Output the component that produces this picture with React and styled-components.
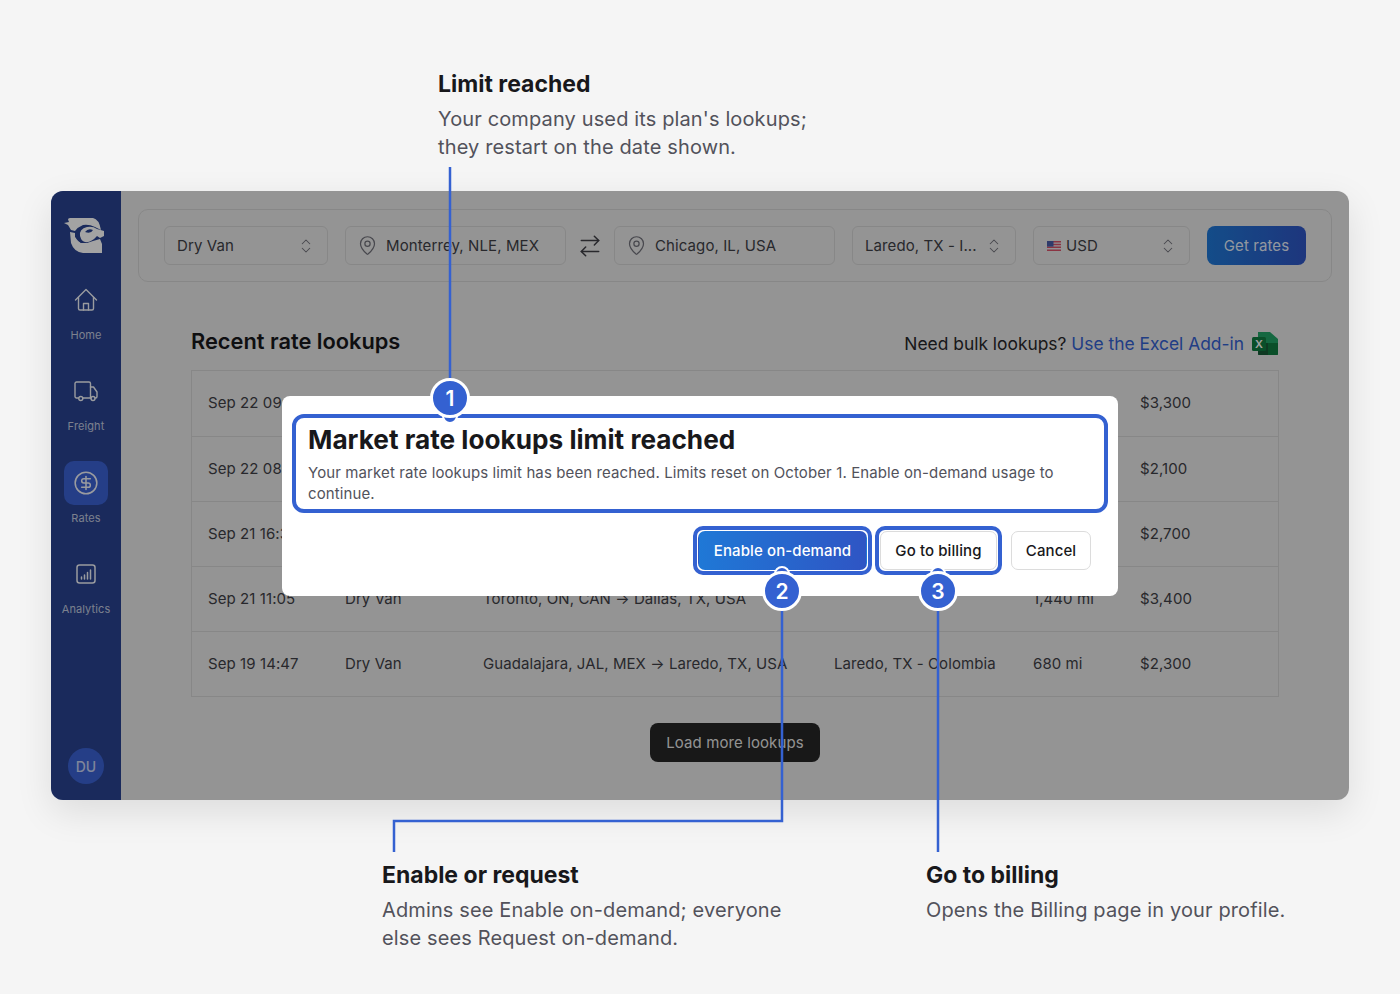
import React from 'react';
import styled, { createGlobalStyle } from 'styled-components';
import { CircleDollarSign, MapPin, ArrowRightLeft, ChevronsUpDown } from 'lucide-react';

const BLUE = '#3461d1';

const GlobalStyle = createGlobalStyle`
  * {
    box-sizing: border-box;
    margin: 0;
    padding: 0;
  }
  body {
    background: #f5f5f5;
    font-family: Inter, "Liberation Sans", sans-serif;
  }
`;

const Page = styled.div`
  position: relative;
  width: 1400px;
  height: 994px;
  padding-top: 69px;
  overflow: hidden;
  background: #f5f5f5;
`;

const Callout = styled.div`
  margin-left: ${(p) => p.$left || 0}px;
  width: ${(p) => (p.$width ? `${p.$width}px` : 'auto')};
`;

const CalloutTitle = styled.h2`
  color: #18181b;
  font-size: 23px;
  font-weight: 700;
  line-height: 30px;
  margin-bottom: 6px;
`;

const CalloutText = styled.p`
  color: #52525b;
  font-size: 20px;
  font-weight: 400;
  line-height: 28px;
  letter-spacing: 0.13px;
`;

const Window = styled.div`
  position: relative;
  display: flex;
  width: 1298px;
  height: 609px;
  margin: 30px 0 0 51px;
  border-radius: 12px;
  background: #e8e8e8;
  box-shadow: 0 12px 36px rgba(0, 0, 0, 0.1);
`;

const Scrim = styled.div`
  position: absolute;
  inset: 0;
  z-index: 1;
  border-radius: 12px;
  background: rgba(0, 0, 0, 0.36);
`;

const Sidebar = styled.nav`
  display: flex;
  flex: 0 0 70px;
  flex-direction: column;
  align-items: center;
  padding-top: 19px;
  border-radius: 12px 0 0 12px;
  background: #294390;
`;

const LogoMark = styled.svg`
  width: 54px;
  height: 48px;
  margin-bottom: 20px;
`;

const NavItem = styled.a`
  display: flex;
  flex-direction: column;
  align-items: center;
  width: 70px;
  height: 91.4px;
  color: rgba(255, 255, 255, 0.72);
  font-size: 11px;
  line-height: 14px;
  letter-spacing: 0.1px;
`;

const NavIcon = styled.span`
  display: flex;
  align-items: center;
  justify-content: center;
  width: 44px;
  height: 44px;
  margin-bottom: 6px;
  border-radius: 10px;
  color: #f1f3f9;
  background: ${(p) => (p.$active ? '#3b62d4' : 'transparent')};
`;

const Avatar = styled.div`
  display: flex;
  align-items: center;
  justify-content: center;
  width: 36px;
  height: 36px;
  margin-top: auto;
  margin-bottom: 16px;
  border-radius: 50%;
  color: rgba(255, 255, 255, 0.72);
  background: #3b62d4;
  font-size: 14px;
  font-weight: 500;
`;

const Main = styled.main`
  flex: 1;
  padding: 18px 18px 0 17px;
`;

const SearchPanel = styled.div`
  display: flex;
  align-items: center;
  height: 73px;
  padding: 0 25px;
  border: 1px solid #d4d4d4;
  border-radius: 10px;
`;

const Field = styled.div`
  display: flex;
  flex: 0 0 ${(p) => p.$width}px;
  align-items: center;
  height: 39px;
  margin-right: ${(p) => p.$gap ?? 17}px;
  padding: 0 ${(p) => (p.$pin ? 11 : 12)}px;
  border: 1px solid #d4d4d4;
  border-radius: 6px;
  color: #3f3f46;
  font-size: 15px;
  letter-spacing: 0.1px;
  white-space: nowrap;
`;

const FieldLabel = styled.span`
  flex: 1;
  margin-left: ${(p) => p.$indent || 0}px;
`;

const FieldIcon = styled.span`
  display: flex;
  margin-left: ${(p) => p.$nudge || 0}px;
  color: #71717a;
`;

const SwapButton = styled.span`
  display: flex;
  flex: 0 0 48px;
  justify-content: center;
  color: #3f3f46;
`;

const GetRates = styled.button`
  width: 99px;
  height: 39px;
  border: 0;
  border-radius: 8px;
  color: rgba(255, 255, 255, 0.9);
  background: linear-gradient(90deg, #1f78d6, #2f55c4);
  font: 400 15px Inter, sans-serif;
  letter-spacing: 0.1px;
`;

const Section = styled.section`
  padding: 0 53px;
`;

const SectionHead = styled.div`
  display: flex;
  align-items: center;
  justify-content: space-between;
  height: 88px;
  padding-top: 30px;
`;

const Heading = styled.h1`
  color: #18181b;
  font-size: 21.8px;
  font-weight: 600;
`;

const BulkNote = styled.p`
  display: flex;
  align-items: center;
  gap: 8px;
  margin-top: 5px;
  color: #27272a;
  font-size: 17.4px;
`;

const BulkLink = styled.a`
  color: #3461d1;
`;

const Table = styled.div`
  border: 1px solid #d4d4d4;
`;

const Row = styled.div`
  display: grid;
  grid-template-columns: 137px 138px 351px 199px 107px 1fr;
  align-items: center;
  height: 65px;
  padding: 0 0 2px 16px;
  border-top: 1px solid #d4d4d4;
  color: #3f3f46;
  font-size: 15px;
  letter-spacing: 0.08px;
  white-space: nowrap;

  &:first-child {
    border-top: 0;
  }
`;

const LoadMoreRow = styled.div`
  display: flex;
  justify-content: center;
  margin-top: 26px;
`;

const LoadMore = styled.button`
  width: 170px;
  height: 39px;
  border: 0;
  border-radius: 8px;
  color: rgba(255, 255, 255, 0.9);
  background: #262626;
  font: 400 15px Inter, sans-serif;
  letter-spacing: 0.1px;
`;

const Modal = styled.div`
  position: absolute;
  z-index: 2;
  top: 205px;
  left: 231px;
  width: 836px;
  height: 200px;
  padding: 18px 10px 0;
  border-radius: 8px;
  background: #fff;
`;

const MessageBox = styled.div`
  height: 99px;
  padding: 4px 12px 0;
  border: 4px solid ${BLUE};
  border-radius: 12px;
`;

const ModalTitle = styled.h3`
  color: #18181b;
  font-size: 26.2px;
  font-weight: 700;
  line-height: 36px;
  margin-bottom: 4px;
`;

const ModalText = styled.p`
  color: #52525b;
  font-size: 15px;
  letter-spacing: 0.11px;
  line-height: 21px;
`;

const Actions = styled.div`
  display: flex;
  align-items: center;
  justify-content: flex-end;
  margin-top: 13px;
  padding-right: 17px;
`;

const Ring = styled.div`
  margin-right: ${(p) => p.$gap}px;
  padding: 1px;
  border: 4px solid ${BLUE};
  border-radius: 10px;
`;

const ActionButton = styled.button`
  display: block;
  width: ${(p) => p.$width}px;
  height: 39px;
  border: 1px solid ${(p) => (p.$primary ? 'transparent' : '#dcdcdc')};
  border-radius: 7px;
  color: ${(p) => (p.$primary ? '#fff' : '#18181b')};
  background: ${(p) => (p.$primary ? 'linear-gradient(90deg, #1f78d6, #2f55c4)' : '#fff')};
  font: 500 15px Inter, sans-serif;
  letter-spacing: 0.1px;
`;

/* the small dot on the highlighted element, half hidden by its badge */
const AnchorDot = styled.span`
  position: absolute;
  top: ${(p) => p.$top}px;
  left: ${(p) => p.$left}px;
  width: 16px;
  height: 16px;
  border: 2px solid #fff;
  border-radius: 50%;
  background: ${BLUE};
`;

const Badge = styled.span`
  position: absolute;
  top: ${(p) => p.$top}px;
  left: ${(p) => p.$left}px;
  display: flex;
  align-items: center;
  justify-content: center;
  width: 40px;
  height: 40px;
  border: 3px solid #fff;
  border-radius: 50%;
  color: #fff;
  background: ${BLUE};
  font-size: 21px;
  font-weight: 600;
`;

const Connectors = styled.svg`
  position: absolute;
  z-index: 3;
  top: 0;
  left: 0;
  pointer-events: none;
`;

const BottomCallouts = styled.div`
  display: flex;
  margin-top: 60px;
`;

const ROWS = [
  ['Sep 22 09:12', '', '', '', '', '$3,300'],
  ['Sep 22 08:41', '', '', '', '', '$2,100'],
  ['Sep 21 16:30', '', '', '', '', '$2,700'],
  ['Sep 21 11:05', 'Dry Van', 'Toronto, ON, CAN → Dallas, TX, USA', '', '1,440 mi', '$3,400'],
  ['Sep 19 14:47', 'Dry Van', 'Guadalajara, JAL, MEX → Laredo, TX, USA', 'Laredo, TX - Colombia', '680 mi', '$2,300'],
];

const Logo = () => (
  <LogoMark viewBox="0 0 54 48">
    <path fill="#fff" d="M5 13 10 12 9 9.5Q9 8 11 8H34Q40 9 42 20L36 17Q30 14 24 15 19 17 16 21L12 20 9 15Z" />
    <path fill="#fff" d="M11 22 16 23Q16 30 22 33L28 33 34 31 41 29 43 34V43H24Q15 42 12 33Z" />
    <path fill="#fff" d="M21 26Q20 19 28 17 34 16 38 19L45 21V26L41 28 38 26Q32 33 26 32 22 31 21 26Z" />
    <path fill="#294390" d="M26 22Q29 18 34 20 32 24 26 22Z" />
    <path fill="#294390" d="M16 21 21 26 22 33 16 27Z" />
  </LogoMark>
);

const HomeIcon = () => (
  <svg width="24" height="24" viewBox="0 0 24 24" fill="none" stroke="currentColor" strokeWidth="1.4" strokeLinecap="round" strokeLinejoin="round">
    <path d="M1.5 12 12 1.5 22.5 12" />
    <path d="M4.5 9.5V20.5A1.5 1.5 0 0 0 6 22H18A1.5 1.5 0 0 0 19.5 20.5V9.5" />
    <path d="M9.5 22V15.5H14.5V22" />
  </svg>
);

const FreightIcon = () => (
  <svg width="24" height="24" viewBox="0 0 24 24" fill="none" stroke="currentColor" strokeWidth="1.4" strokeLinecap="round" strokeLinejoin="round">
    <path d="M4.5 19H2.5A1.5 1.5 0 0 1 1 17.5V4.5A1.5 1.5 0 0 1 2.5 3H15A1.5 1.5 0 0 1 16.5 4.5V19H9" />
    <path d="M16.5 8H19.5L23 13V17.5A1.5 1.5 0 0 1 21.5 19H21M16.5 19H17" />
    <circle cx="6.8" cy="19.5" r="2" />
    <circle cx="19" cy="19.5" r="2" />
  </svg>
);

const BarsIcon = () => (
  <svg width="22" height="22" viewBox="0 0 22 22" fill="none" stroke="currentColor" strokeWidth="1.5" strokeLinecap="round">
    <rect x="2" y="2" width="18" height="18" rx="2.5" />
    <path d="M6.5 16v-2M9.5 16v-4M12.5 16V9.5M15.5 16V7" />
  </svg>
);

const FlagIcon = () => (
  <svg width="14" height="10" viewBox="0 0 14 10">
    <rect width="14" height="10" rx="1" fill="#e5e7eb" />
    <path fill="#d9526a" d="M0 0h14v1.4H0zM0 2.8h14v1.4H0zM0 5.6h14V7H0zM0 8.6h14V10H0z" />
    <rect width="6.5" height="5.6" fill="#4a5da8" />
  </svg>
);

const ExcelIcon = () => (
  <svg width="27" height="25" viewBox="0 0 27 25">
    <path fill="#21a366" d="M6 1h12l8 7v15a1 1 0 0 1-1 1H7a1 1 0 0 1-1-1z" />
    <path fill="#107c41" d="M16 12h10v11a1 1 0 0 1-1 1H16z" />
    <path fill="#185c37" d="M6 12h10v12H7a1 1 0 0 1-1-1z" />
    <rect x="0" y="6" width="14" height="14" rx="1.5" fill="#107c41" />
    <text x="7" y="17" fill="#fff" fontSize="11" fontWeight="600" textAnchor="middle" fontFamily="Inter, sans-serif">X</text>
  </svg>
);

const NAV = [
  { label: 'Home', icon: <HomeIcon /> },
  { label: 'Freight', icon: <FreightIcon /> },
  { label: 'Rates', icon: <CircleDollarSign size={26} strokeWidth={1.4} />, active: true },
  { label: 'Analytics', icon: <BarsIcon /> },
];

export default function App() {
  return (
    <Page>
      <GlobalStyle />
      <Callout $left={438}>
        <CalloutTitle>Limit reached</CalloutTitle>
        <CalloutText>
          Your company used its plan's lookups;
          <br />
          they restart on the date shown.
        </CalloutText>
      </Callout>

      <Window>
        <Sidebar>
          <Logo />
          {NAV.map((item) => (
            <NavItem key={item.label}>
              <NavIcon $active={item.active}>{item.icon}</NavIcon>
              {item.label}
            </NavItem>
          ))}
          <Avatar>DU</Avatar>
        </Sidebar>

        <Main>
          <SearchPanel>
            <Field $width={164}>
              <FieldLabel>Dry Van</FieldLabel>
              <FieldIcon><ChevronsUpDown size={18} strokeWidth={1.4} /></FieldIcon>
            </Field>
            <Field $width={221} $gap={0} $pin>
              <FieldIcon><MapPin size={21} strokeWidth={1.4} /></FieldIcon>
              <FieldLabel $indent={8}>Monterrey, NLE, MEX</FieldLabel>
            </Field>
            <SwapButton><ArrowRightLeft size={26} strokeWidth={1.4} /></SwapButton>
            <Field $width={221} $pin>
              <FieldIcon><MapPin size={21} strokeWidth={1.4} /></FieldIcon>
              <FieldLabel $indent={8}>Chicago, IL, USA</FieldLabel>
            </Field>
            <Field $width={164}>
              <FieldLabel>Laredo, TX - I...</FieldLabel>
              <FieldIcon><ChevronsUpDown size={18} strokeWidth={1.4} /></FieldIcon>
            </Field>
            <Field $width={157}>
              <FieldIcon $nudge={1}><FlagIcon /></FieldIcon>
              <FieldLabel $indent={5}>USD</FieldLabel>
              <FieldIcon><ChevronsUpDown size={18} strokeWidth={1.4} /></FieldIcon>
            </Field>
            <GetRates>Get rates</GetRates>
          </SearchPanel>

          <Section>
            <SectionHead>
              <Heading>Recent rate lookups</Heading>
              <BulkNote>
                <span>
                  Need bulk lookups? <BulkLink>Use the Excel Add-in</BulkLink>
                </span>
                <ExcelIcon />
              </BulkNote>
            </SectionHead>
            <Table>
              {ROWS.map((row) => (
                <Row key={row[0]}>
                  {row.map((cell, i) => (
                    <span key={i}>{cell}</span>
                  ))}
                </Row>
              ))}
            </Table>
            <LoadMoreRow>
              <LoadMore>Load more lookups</LoadMore>
            </LoadMoreRow>
          </Section>
        </Main>

        <Scrim />

        <Modal>
          <MessageBox>
            <ModalTitle>Market rate lookups limit reached</ModalTitle>
            <ModalText>
              Your market rate lookups limit has been reached. Limits reset on October 1. Enable on-demand usage to
              continue.
            </ModalText>
          </MessageBox>
          <Actions>
            <Ring $gap={3}>
              <ActionButton $primary $width={169}>Enable on-demand</ActionButton>
            </Ring>
            <Ring $gap={9}>
              <ActionButton $width={117}>Go to billing</ActionButton>
            </Ring>
            <ActionButton $width={80}>Cancel</ActionButton>
          </Actions>
          <AnchorDot $top={12} $left={160} />
          <AnchorDot $top={170} $left={492} />
          <AnchorDot $top={170} $left={648} />
          <Badge $top={-18} $left={148}>1</Badge>
          <Badge $top={175} $left={480}>2</Badge>
          <Badge $top={175} $left={636}>3</Badge>
        </Modal>
      </Window>

      <BottomCallouts>
        <Callout $left={382} $width={544}>
          <CalloutTitle>Enable or request</CalloutTitle>
          <CalloutText>
            Admins see Enable on-demand; everyone
            <br />
            else sees Request on-demand.
          </CalloutText>
        </Callout>
        <Callout>
          <CalloutTitle>Go to billing</CalloutTitle>
          <CalloutText>Opens the Billing page in your profile.</CalloutText>
        </Callout>
      </BottomCallouts>

      <Connectors width="1400" height="994" fill="none" stroke={BLUE} strokeWidth="2.5">
        <path d="M450 167V378" />
        <path d="M782 611V821H394V852" />
        <path d="M938 611V852" />
      </Connectors>
    </Page>
  );
}
